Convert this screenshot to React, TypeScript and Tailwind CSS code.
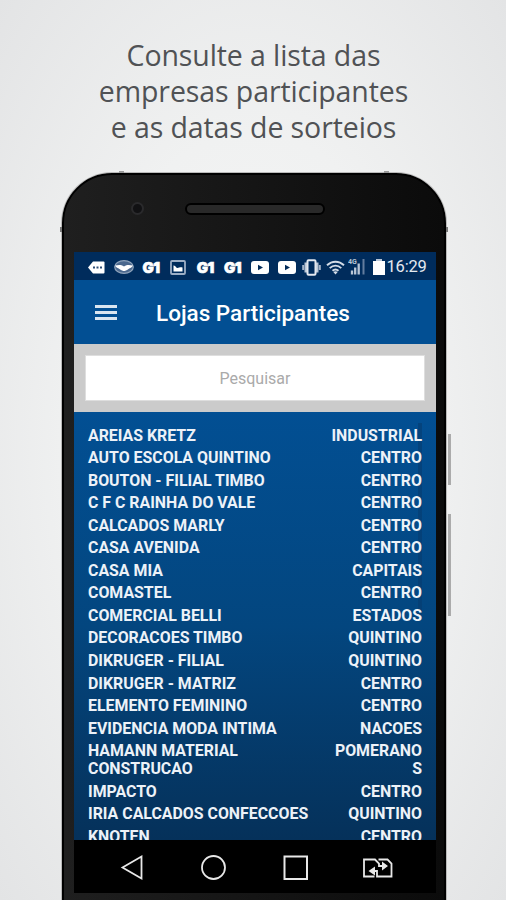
import type { ReactNode } from 'react';

type Store = { name: string; district: string };

const stores: Store[] = [
  { name: 'AREIAS KRETZ', district: 'INDUSTRIAL' },
  { name: 'AUTO ESCOLA QUINTINO', district: 'CENTRO' },
  { name: 'BOUTON - FILIAL TIMBO', district: 'CENTRO' },
  { name: 'C F C RAINHA DO VALE', district: 'CENTRO' },
  { name: 'CALCADOS MARLY', district: 'CENTRO' },
  { name: 'CASA AVENIDA', district: 'CENTRO' },
  { name: 'CASA MIA', district: 'CAPITAIS' },
  { name: 'COMASTEL', district: 'CENTRO' },
  { name: 'COMERCIAL BELLI', district: 'ESTADOS' },
  { name: 'DECORACOES TIMBO', district: 'QUINTINO' },
  { name: 'DIKRUGER - FILIAL', district: 'QUINTINO' },
  { name: 'DIKRUGER - MATRIZ', district: 'CENTRO' },
  { name: 'ELEMENTO FEMININO', district: 'CENTRO' },
  { name: 'EVIDENCIA MODA INTIMA', district: 'NACOES' },
  { name: 'HAMANN MATERIAL CONSTRUCAO', district: 'POMERANOS' },
  { name: 'IMPACTO', district: 'CENTRO' },
  { name: 'IRIA CALCADOS CONFECCOES', district: 'QUINTINO' },
  { name: 'KNOTEN', district: 'CENTRO' }
];

function Slot({ children }: { children: ReactNode }) {
  return <span className="flex w-[27.2px] shrink-0 items-center justify-center">{children}</span>;
}

function G1() {
  return (
    <span className="font-['Inter'] text-[15px] leading-none font-black tracking-[-0.5px] text-white [-webkit-text-stroke:0.6px_white]">
      G1
    </span>
  );
}

function YouTube() {
  return (
    <svg width="18" height="13" viewBox="0 0 18 13">
      <rect width="18" height="13" rx="3" fill="#fff" />
      <path d="M7 3.7v5.6l5-2.8z" fill="#022b59" />
    </svg>
  );
}

function StatusBar() {
  return (
    <div className="flex h-7 items-center bg-[#002c5c] pt-0.5 pl-[9px]">
      <Slot>
        <svg width="17" height="13" viewBox="0 0 17 13">
          <path d="M0 6.5 5 .5h10.500a1 1 0 0 1 1 1v10a1 1 0 0 1-1 1H5z" fill="#fff" />
          <path d="M5 5.500h2v2H5zM8.500 5.500h2v2h-2zM12 5.500h2v2h-2z" fill="#2c4d76" />
        </svg>
      </Slot>
      <Slot>
        <svg width="20" height="14" viewBox="0 0 20 14">
          <ellipse cx="10" cy="7" rx="9.300" ry="6.300" fill="#4b688e" stroke="#8fa3bb" strokeWidth="1.200" />
          <path d="M1 5.500c3 0 5-1.500 9 1 4-2.500 6-1 9-1-1 2-3 2.500-4.500 3.500C12.500 10.500 11 11 10 11s-2.500-.5-4.500-2C4 8 2 7.500 1 5.500z" fill="#fff" />
        </svg>
      </Slot>
      <Slot><G1 /></Slot>
      <Slot>
        <svg width="16" height="15" viewBox="0 0 16 15">
          <rect x="1" y="1" width="14" height="13" rx="1" fill="none" stroke="#9dafc6" strokeWidth="1.800" />
          <path d="M3.500 5.500c2-.5 2.500 2.500 4 2.500S10 7 12.500 7.500v4h-9z" fill="#fff" />
        </svg>
      </Slot>
      <Slot><G1 /></Slot>
      <Slot><G1 /></Slot>
      <Slot><YouTube /></Slot>
      <Slot><YouTube /></Slot>
      <svg className="ml-px shrink-0" width="19" height="17" viewBox="0 0 19 17">
        <path d="M4 3.500v10M15 3.500v10" stroke="#b9c6d6" strokeWidth="3" />
        <path d="M1.200 6v5M17.800 6v5" stroke="#a5b5c9" strokeWidth="2" />
        <rect x="5.500" y="1.200" width="8" height="14.600" rx="1" fill="#002c5c" stroke="#e3e8ef" strokeWidth="2" />
      </svg>
      <svg className="ml-[5px] shrink-0" width="19" height="15" viewBox="0 0 19 15" fill="none" stroke="#d3dce7" strokeWidth="1.900">
        <path d="M1 5.300C6 .5 13 .5 18 5.300M3.700 8.100c3.500-3.200 8.100-3.200 11.600 0M6.500 10.800c1.800-1.600 4.200-1.600 6 0" />
        <path d="m7.300 12 2.200 2.500 2.200-2.500c-1.300-1-3.100-1-4.400 0z" fill="#d3dce7" stroke="none" />
      </svg>
      <svg className="ml-[3px] shrink-0" width="18" height="18" viewBox="0 0 18 18">
        <text x="0" y="6" fontFamily="Roboto" fontWeight="700" fontSize="7" fill="#b9c6d6">4G</text>
        <path d="M4 12.500v4M7.200 9.500v7M10.700 5.500v11" stroke="#b9c6d6" strokeWidth="2.300" />
        <path d="M15.500 1v15.500" stroke="#637d9e" strokeWidth="2" />
      </svg>
      <svg className="ml-[7px] shrink-0" width="12" height="16" viewBox="0 0 12 16">
        <path d="M0 2h12v14H0z" fill="#fff" />
        <path d="M3 0h6v2H3z" fill="#b9c6d6" />
      </svg>
      <span className="mt-px ml-[2px] text-[16.500px] leading-none tracking-[-0.2px] text-[#e4e9f0]">16:29</span>
    </div>
  );
}

function NavBar() {
  return (
    <div className="h-[53px] bg-black">
      <svg width="362" height="53" viewBox="0 0 362 53" fill="none" stroke="#e8e8e8" strokeWidth="1.800">
        <path d="M48.500 27.500 67.500 16.500v22z" />
        <circle cx="139.500" cy="27.500" r="11.500" />
        <path d="M210.500 16.500h22.500v22.500h-22.500z" strokeWidth="2" />
        {/* two overlapping cards with the swap arrows between them */}
        <g strokeWidth="1.800">
          <path d="M300.500 36.500h-10.500v-17h11l4 4v2.500h4M304.500 19.500h9l4 4v13h-14.500v-5.500h-4" />
          <path d="m301 26.500-6.500 4.500 6.500 4.500zM308 21.500v9l6-4.500z" fill="#e8e8e8" stroke="none" />
        </g>
      </svg>
    </div>
  );
}

export default function App() {
  return (
    <div className="flex h-[900px] w-[506px] flex-col items-center overflow-hidden bg-[radial-gradient(ellipse_at_center,_#f7f7f7_0%,_#f0f1f1_50%,_#e3e4e5_100%)] font-['Roboto',sans-serif]">
      <h1 className="mt-[37px] ml-px h-[136px] shrink-0 text-center font-['Open_Sans',sans-serif] text-[28.500px] leading-[36px] font-normal tracking-[-0.1px] whitespace-nowrap text-[#505255]">
        Consulte a lista das
        <br />
        empresas participantes
        <br />
        e as datas de sorteios
      </h1>

      <div className="relative ml-[2px] h-[760px] w-[384px] shrink-0 rounded-t-[50px] border-2 border-black bg-gradient-to-r from-[#1f1f1f] via-[#151515] to-[#0b0b0b] shadow-[0_0_0_1px_#b9b9b9]">
        <span className="absolute -top-[4px] left-[55px] h-[2px] w-[5px] bg-[#999]" />
        <span className="absolute -top-[4px] right-[55px] h-[2px] w-[5px] bg-[#999]" />
        <span className="absolute top-[52px] -left-[4px] h-[5px] w-[2px] bg-[#777]" />
        <span className="absolute top-[52px] -right-[4px] h-[5px] w-[2px] bg-[#777]" />
        <span className="absolute top-[259px] -right-[7px] h-[51px] w-[3px] bg-[#ababab]" />
        <span className="absolute top-[339px] -right-[7px] h-[102px] w-[3px] bg-[#ababab]" />
        <div className="relative h-[77px]">
          <span className="absolute top-[27px] left-[67px] size-[13px] rounded-full border-2 border-[#2a2a2c] bg-[#111113]" />
          <span className="absolute top-[28px] left-[121px] h-[12px] w-[140px] rounded-full border-2 border-black bg-[#292929]" />
        </div>

        <div className="ml-[10px] w-[362px]">
          <StatusBar />
          <header className="flex h-16 items-center bg-[#024f93] pt-px pl-[21px] text-white">
            <div className="flex w-[22px] flex-col gap-[3px]">
              <span className="h-[3px] bg-[#d9e5f0]" />
              <span className="h-[3px] bg-[#d9e5f0]" />
              <span className="h-[3px] bg-[#d9e5f0]" />
            </div>
            <span className="mt-[2px] ml-[39px] text-[22.500px] font-medium">Lojas Participantes</span>
          </header>
          <div className="h-[68px] bg-[#cbcbcb] px-[11px] py-[11px]">
            <input
              placeholder="Pesquisar"
              className="h-[46px] w-full border border-[#dedede] bg-white text-center font-['Roboto',sans-serif] text-[16px] outline-none placeholder:text-[#aaa]"
            />
          </div>
          <div className="relative h-[428px] overflow-hidden bg-gradient-to-b from-[#024f93] via-[#03467f] to-[#05315a] px-[14px] pt-[14.500px]">
            <span className="absolute top-[11px] right-[14px] h-[192px] w-[4px] bg-[#063c70]/60" />
            <ul className="relative flex flex-col gap-[4.550px] text-[15.900px] leading-[18px] font-bold text-[#edf2f8]">
              {stores.map(store => (
                <li key={store.name} className="flex justify-between">
                  <span className="w-[235px]">{store.name}</span>
                  <span className="w-[94px] text-right break-all">{store.district}</span>
                </li>
              ))}
            </ul>
          </div>
          <NavBar />
        </div>
      </div>
    </div>
  );
}
